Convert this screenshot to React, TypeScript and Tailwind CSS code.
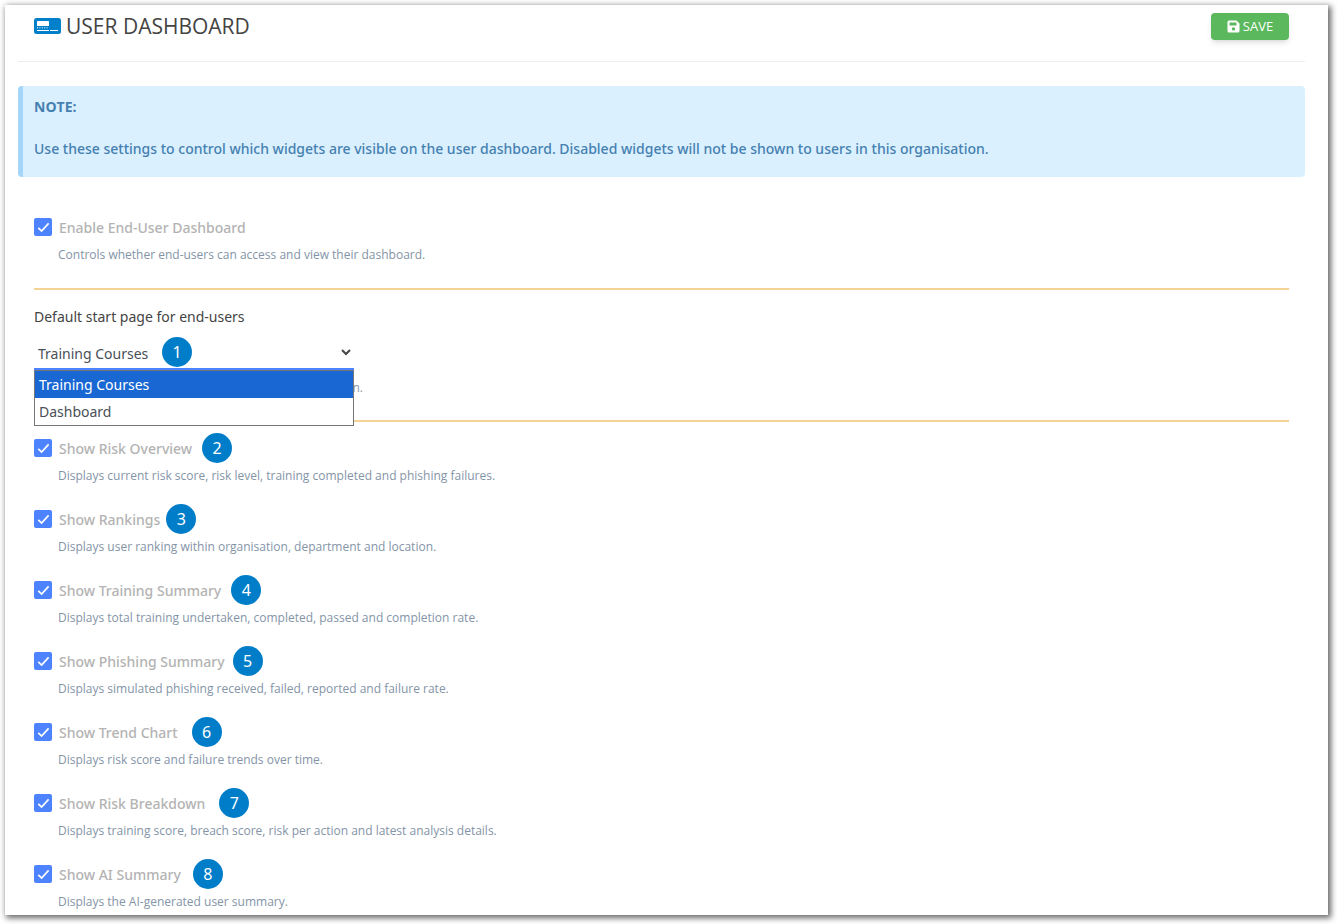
import React from "react";

const widgets = [
  {
    id: "risk-overview",
    label: "Show Risk Overview",
    help: "Displays current risk score, risk level, training completed and phishing failures.",
    step: 2,
    gap: "ml-2.5",
  },
  {
    id: "rankings",
    label: "Show Rankings",
    help: "Displays user ranking within organisation, department and location.",
    step: 3,
    gap: "ml-1.5",
  },
  {
    id: "training-summary",
    label: "Show Training Summary",
    help: "Displays total training undertaken, completed, passed and completion rate.",
    step: 4,
    gap: "ml-2.5",
  },
  {
    id: "phishing-summary",
    label: "Show Phishing Summary",
    help: "Displays simulated phishing received, failed, reported and failure rate.",
    step: 5,
    gap: "ml-2",
  },
  {
    id: "trend-chart",
    label: "Show Trend Chart",
    help: "Displays risk score and failure trends over time.",
    step: 6,
    gap: "ml-3.5",
  },
  {
    id: "risk-breakdown",
    label: "Show Risk Breakdown",
    help: "Displays training score, breach score, risk per action and latest analysis details.",
    step: 7,
    gap: "ml-3.5",
  },
  {
    id: "ai-summary",
    label: "Show AI Summary",
    help: "Displays the AI-generated user summary.",
    step: 8,
    gap: "ml-3",
  },
];

const DashboardIcon = () => (
  <svg width="27" height="16" viewBox="0 0 27 16" aria-hidden="true">
    <rect width="27" height="16" rx="2.5" fill="#0080cb" />
    <rect x="3" y="3" width="12" height="5" rx="0.5" fill="#fff" />
    <path d="M3 9.8h12" stroke="#fff" strokeWidth="1.6" strokeDasharray="1 1.4" opacity="0.7" />
    <path d="M3 12.5h12M16 12.5h8" stroke="#fff" strokeWidth="1" />
  </svg>
);

const SaveIcon = () => (
  <svg width="13" height="13" viewBox="0 0 13 13" aria-hidden="true">
    <path
      fillRule="evenodd"
      fill="#fff"
      d="M2 0.5h7.5L12.5 3.5v7.5a1.5 1.5 0 0 1-1.5 1.5H2A1.5 1.5 0 0 1 .5 11V2A1.5 1.5 0 0 1 2 .5zM2.5 2.5v3h7v-3zM6.5 7.2a1.7 1.7 0 1 0 0 3.4 1.7 1.7 0 0 0 0-3.4z"
    />
  </svg>
);

const Badge = ({ step }: { step: number }) => (
  <span className="flex h-[30px] w-[30px] shrink-0 items-center justify-center rounded-full bg-[#007dc8] text-base text-white">
    {step}
  </span>
);

type SettingProps = {
  id: string;
  label: string;
  help: string;
  step?: number;
  gap?: string;
};

const Setting = ({ id, label, help, step, gap }: SettingProps) => (
  <div>
    <div className="flex h-5 items-center">
      <span className="relative flex h-[18px] w-[18px]">
        <input
          id={id}
          type="checkbox"
          defaultChecked
          aria-describedby={id + "-help"}
          className="peer h-[18px] w-[18px] appearance-none rounded-xs border border-gray-400 checked:border-0 checked:bg-[#4d83ff]"
        />
        <svg
          className="pointer-events-none absolute inset-0 hidden peer-checked:block"
          width="18"
          height="18"
          viewBox="0 0 18 18"
          fill="none"
          aria-hidden="true"
        >
          <path d="M4.3 9.8l3.3 3.2 7-7.6" stroke="#fff" strokeWidth="1.7" />
        </svg>
      </span>
      <label htmlFor={id} className="ml-[7px] pt-0.5 text-sm font-medium text-[#b3b3b3]">
        {label}
      </label>
      {step && (
        <span className={gap}>
          <Badge step={step} />
        </span>
      )}
    </div>
    <p id={id + "-help"} className="mt-2 ml-6 font-['Open_Sans',sans-serif] text-xs leading-[19px] text-[#8494a7]">
      {help}
    </p>
  </div>
);

const StartPage = () => (
  <div>
    <label htmlFor="start-page" className="block text-sm leading-5 text-[#444]">
      Default start page for end-users
    </label>
    <div className="relative mt-2 w-[320px]">
      <select
        id="start-page"
        defaultValue="training"
        className="block h-[35px] w-full appearance-none border-b-2 border-[#4d83ff] bg-transparent pt-1 pl-1 text-sm text-[#495057] outline-none"
      >
        <option value="training">Training Courses</option>
        <option value="dashboard">Dashboard</option>
      </select>
      <svg
        className="pointer-events-none absolute top-3 right-[3px]"
        width="10"
        height="10"
        viewBox="0 0 10 10"
        fill="none"
        aria-hidden="true"
      >
        <path d="M1 3l4 4 4-4" stroke="#444" strokeWidth="2" />
      </svg>
      <div className="absolute top-0.5 left-32">
        <Badge step={1} />
      </div>
      <ul
        role="listbox"
        aria-label="Start page"
        className="absolute top-full left-0 z-10 w-full border border-[#767676] bg-white text-sm leading-[27px] text-[#495057]"
      >
        <li role="option" aria-selected="true" className="bg-[#1967d2] pl-1 text-white">
          Training Courses
        </li>
        <li role="option" aria-selected="false" className="pl-1">
          Dashboard
        </li>
      </ul>
    </div>
    <p className="mt-2 w-[329px] text-right font-['Open_Sans',sans-serif] text-xs leading-[19px] text-[#8494a7]">n.</p>
  </div>
);

export default function App() {
  return (
    <div className="bg-white pt-[5px] pr-[9px] pb-[9px] pl-[5px] font-['Noto_Sans',sans-serif]">
      <main className="bg-white pr-[23px] pb-1 pl-[13px] shadow-[2px_2px_6px_1px_rgba(0,0,0,0.6)]">
        <header className="flex items-start justify-between border-b border-[#eee] px-4 pt-2 pb-[21px]">
          <div className="flex items-center gap-[5px]">
            <DashboardIcon />
            <h1 className="font-['Open_Sans',sans-serif] text-[21px] leading-[26px] text-[#444]">USER DASHBOARD</h1>
          </div>
          <button
            type="button"
            className="flex h-[27px] w-[78px] items-center justify-center gap-[3px] rounded-sm bg-[#5cb85c] font-['Open_Sans',sans-serif] text-[13px] font-medium text-white shadow-md"
          >
            <SaveIcon />
            SAVE
          </button>
        </header>

        <section className="mt-6 rounded-sm border-l-[5px] border-[#a4d6fc] bg-[#daf0ff] px-[11px] pt-[10px] pb-[18px] text-sm leading-[21px] text-[#4580b0]">
          <h2 className="font-['Open_Sans',sans-serif] font-bold">NOTE:</h2>
          <p className="mt-[21px] font-medium">
            Use these settings to control which widgets are visible on the user dashboard. Disabled widgets will not be
            shown to users in this organisation.
          </p>
        </section>

        <form className="px-4 pt-10">
          <Setting
            id="enable-dashboard"
            label="Enable End-User Dashboard"
            help="Controls whether end-users can access and view their dashboard."
          />
          <hr className="mt-6 mb-[17px] border-t-2 border-[#f5d296]" />
          <StartPage />
          <hr className="mt-[23px] mb-4 border-t-2 border-[#f5d296]" />
          <div className="flex flex-col gap-6">
            {widgets.map((widget) => (
              <Setting key={widget.id} {...widget} />
            ))}
          </div>
        </form>
      </main>
    </div>
  );
}
